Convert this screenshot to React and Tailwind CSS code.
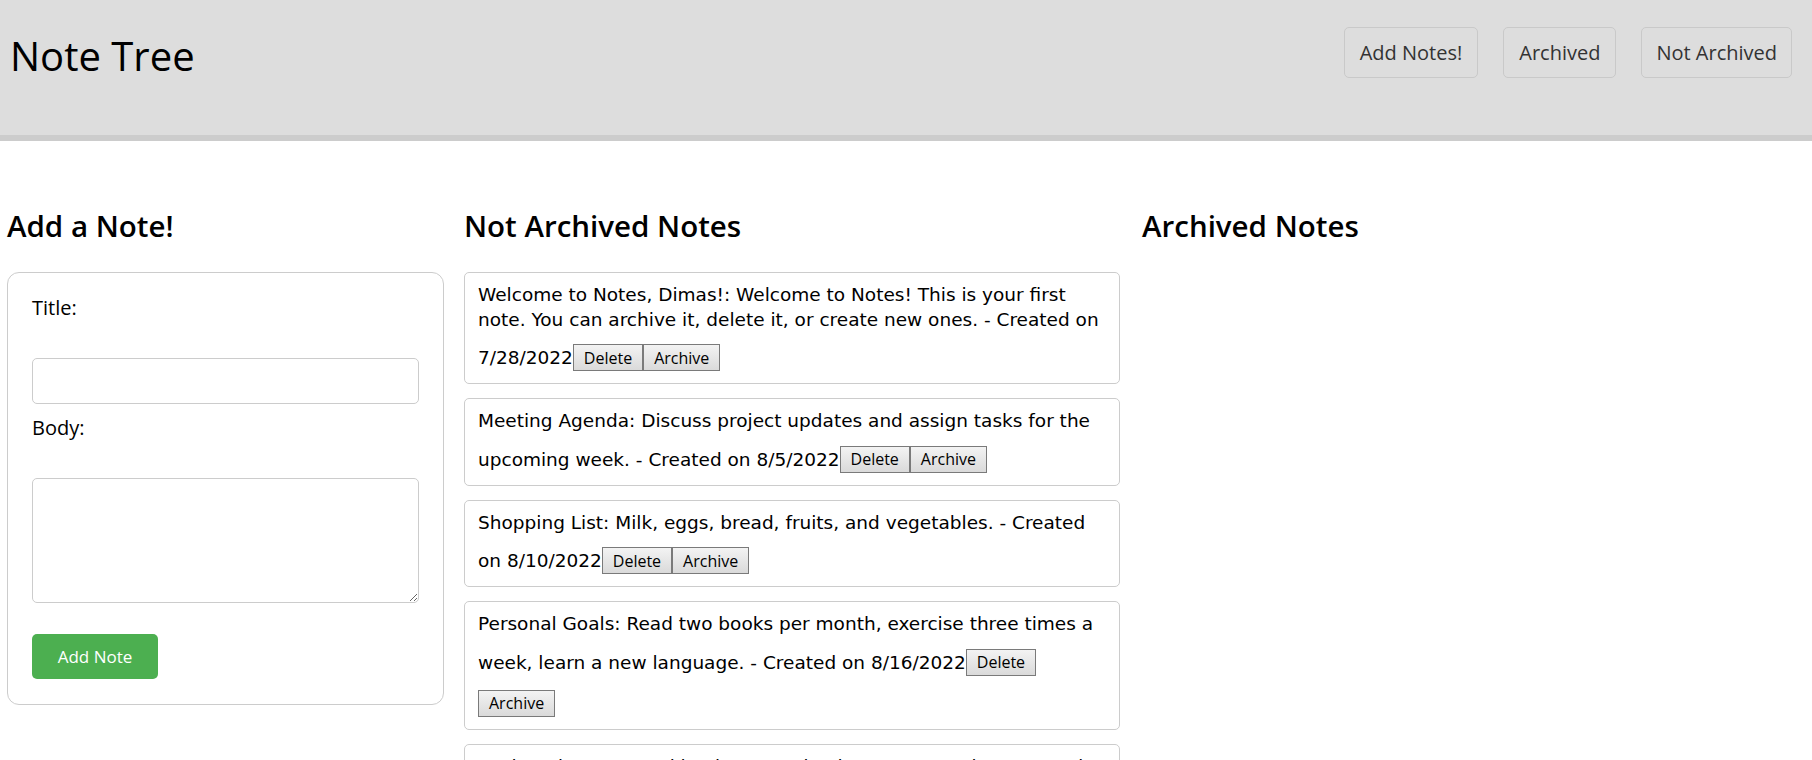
import React from "react";

const notes = [
  {
    title: "Welcome to Notes, Dimas!",
    body: "Welcome to Notes! This is your first note. You can archive it, delete it, or create new ones.",
    date: "7/28/2022",
  },
  {
    title: "Meeting Agenda",
    body: "Discuss project updates and assign tasks for the upcoming week.",
    date: "8/5/2022",
  },
  {
    title: "Shopping List",
    body: "Milk, eggs, bread, fruits, and vegetables.",
    date: "8/10/2022",
  },
  {
    title: "Personal Goals",
    body: "Read two books per month, exercise three times a week, learn a new language.",
    date: "8/16/2022",
  },
  {
    title: "Recipe Ideas",
    body: "Try making homemade pizza, pasta carbonara, and chocolate chip cookies.",
    date: "8/20/2022",
  },
];

function NoteButton({ children }) {
  return (
    <button className="inline-block align-baseline mt-[12px] mb-[2px] h-[27px] px-[10px] border border-[#7a7a7a] bg-linear-to-b from-[#f3f3f3] to-[#dadada] font-['Open_Sans',sans-serif] text-[16px] leading-[24px] text-black">
      {children}
    </button>
  );
}

function NoteCard({ note }) {
  return (
    <div className="border border-[#cccccc] rounded-[5px] pt-[10px] pb-[10px] pl-[13px] pr-[11px] font-['DejaVu_Sans',sans-serif] text-[18.5px] leading-[24.5px] text-black">
      {note.title}: {note.body} - Created on {note.date}
      <NoteButton>Delete</NoteButton>
      <NoteButton>Archive</NoteButton>
    </div>
  );
}

export default function App() {
  return (
    <div className="min-h-screen bg-white font-['Open_Sans',sans-serif] text-black">
      <header className="h-[141px] bg-[#dddddd] border-b-[6px] border-[#cccccc] flex justify-between items-start pl-[10px] pr-[20px]">
        <h1 className="pt-[29px] text-[40px] leading-[54px] font-medium text-black">
          Note Tree
        </h1>
        <nav className="flex gap-[25px] pt-[27px]">
          <button className="h-[51px] px-[15px] border border-[#c9c9c9] rounded-[5px] text-[20px] text-[#333333]">
            Add Notes!
          </button>
          <button className="h-[51px] px-[15px] border border-[#c9c9c9] rounded-[5px] text-[20px] text-[#333333]">
            Archived
          </button>
          <button className="h-[51px] px-[14px] border border-[#c9c9c9] rounded-[5px] text-[20px] text-[#333333]">
            Not Archived
          </button>
        </nav>
      </header>

      <main className="flex items-start gap-[20px] px-[7px] pt-[66px]">
        <section className="w-[437px] shrink-0">
          <h2 className="text-[29.5px] leading-[38px] font-semibold mb-[27px]">Add a Note!</h2>
          <div className="border border-[#cccccc] rounded-[12px] pt-[21px] px-[24px] pb-[25px]">
            <label className="block text-[20px] leading-[27px]">Title:</label>
            <input
              type="text"
              className="block w-full mt-[37px] h-[46px] border border-[#cccccc] rounded-[5px] px-2 bg-white"
            />
            <label className="block mt-[10px] text-[20px] leading-[27px]">Body:</label>
            <textarea className="block w-full mt-[37px] h-[125px] border border-[#cccccc] rounded-[5px] px-2 bg-white" />
            <button className="mt-[31px] w-[126px] h-[45px] bg-[#4caf50] rounded-[5px] text-white text-[17px] font-medium">
              Add Note
            </button>
          </div>
        </section>

        <section className="w-[656px] shrink-0">
          <h2 className="text-[29.5px] leading-[38px] font-semibold mb-[27px]">Not Archived Notes</h2>
          <div className="flex flex-col gap-[14px]">
            {notes.map((n) => (
              <NoteCard key={n.title} note={n} />
            ))}
          </div>
        </section>

        <section className="flex-1 pl-[2px]">
          <h2 className="text-[29.5px] leading-[38px] font-semibold mb-[27px]">Archived Notes</h2>
        </section>
      </main>
    </div>
  );
}
